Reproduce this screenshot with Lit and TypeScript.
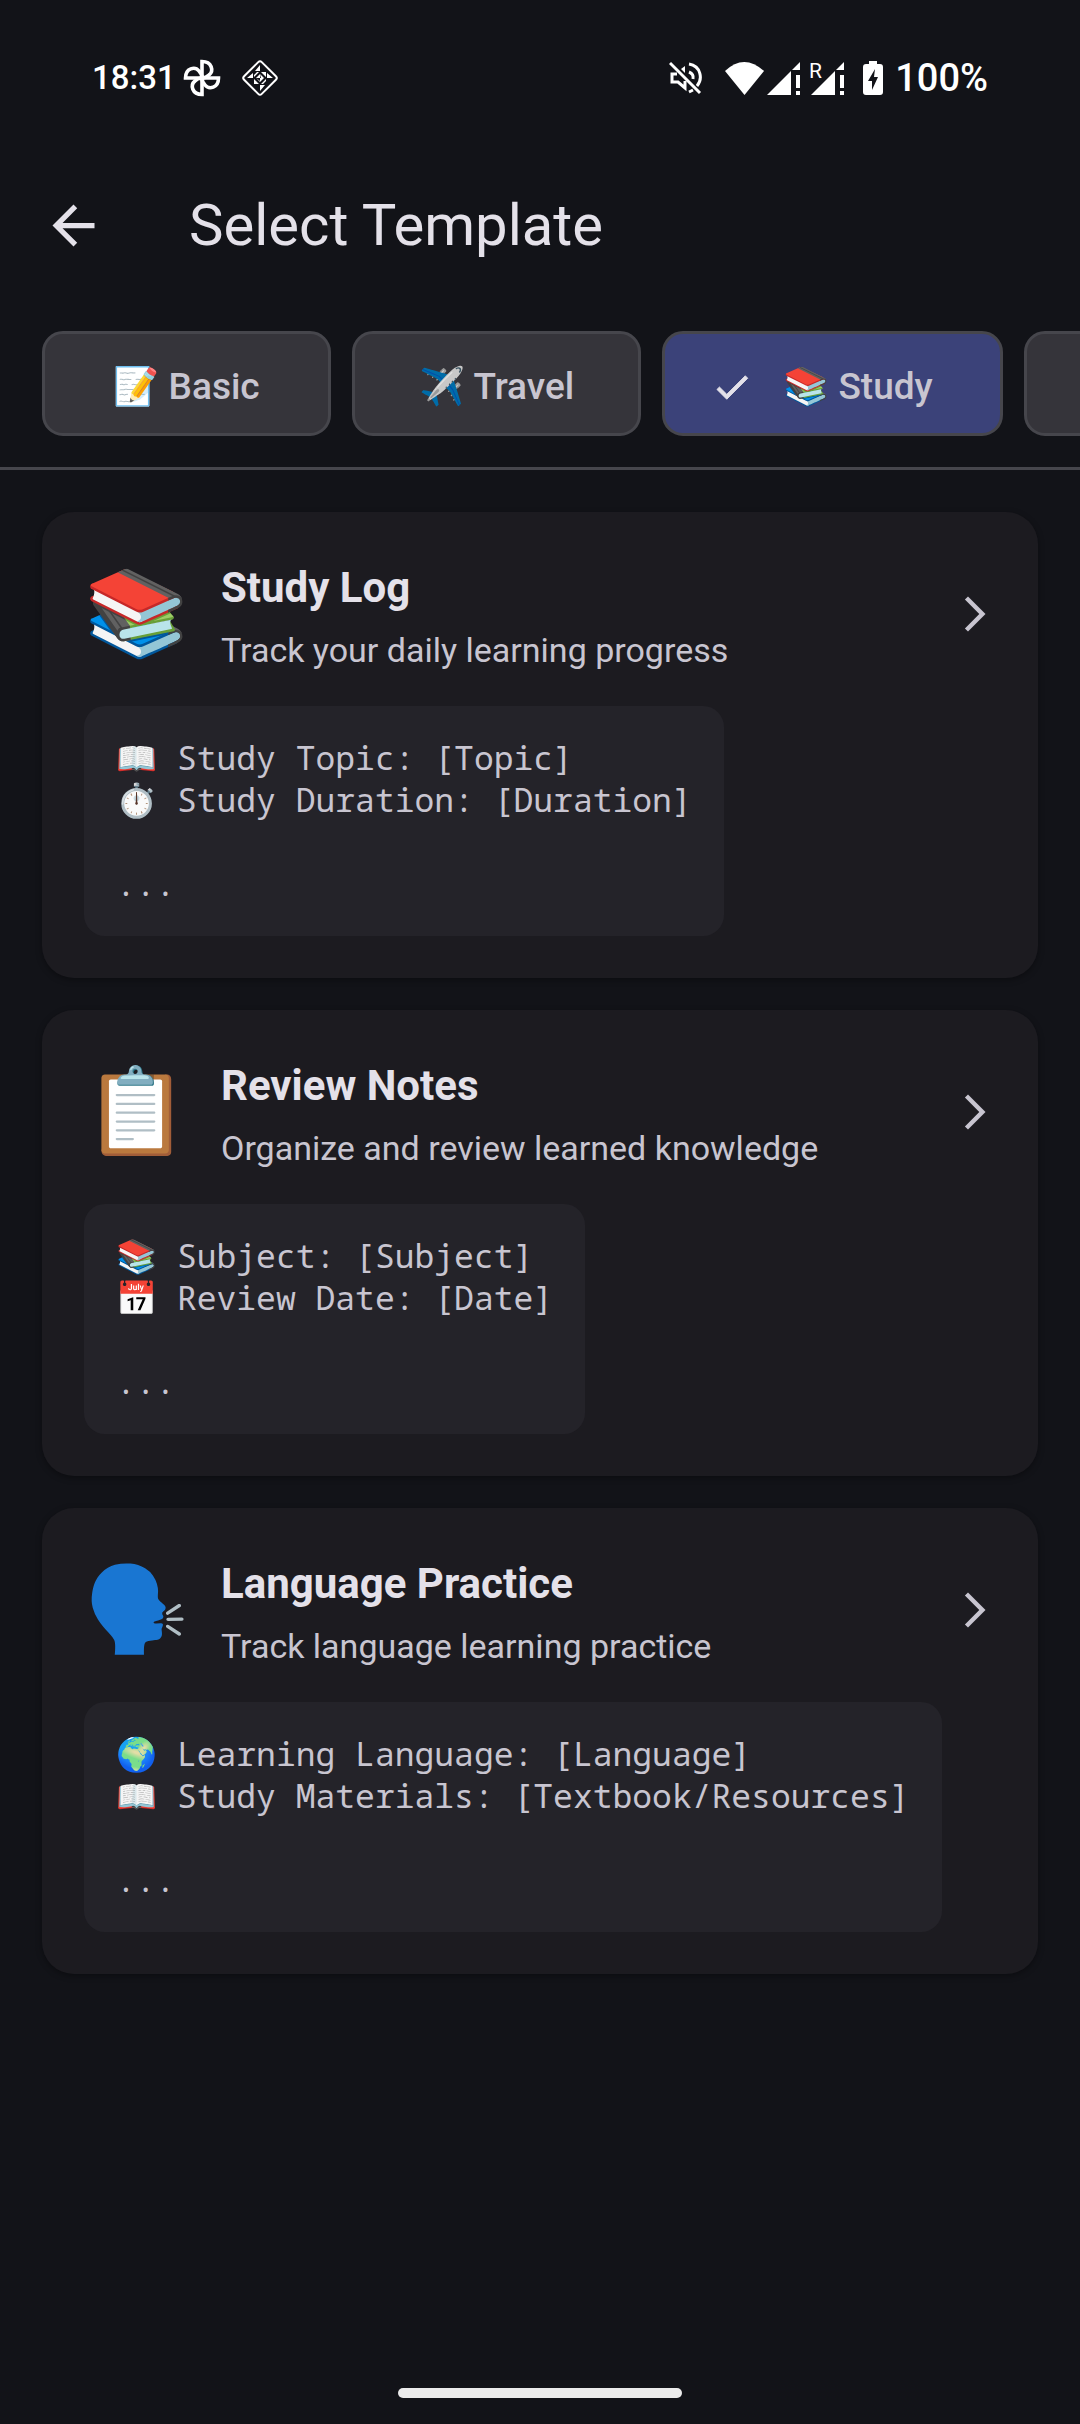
import { LitElement, html, css, svg, nothing } from "lit";
import { customElement, property, state } from "lit/decorators.js";

interface Category {
  id: string;
  emoji: string;
  label: string;
}

interface Template {
  emoji: string;
  title: string;
  summary: string;
  preview: string[];
}

const CATEGORIES: Category[] = [
  { id: "basic", emoji: "📝", label: "Basic" },
  { id: "travel", emoji: "✈️", label: "Travel" },
  { id: "study", emoji: "📚", label: "Study" },
  { id: "more", emoji: "", label: "" },
];

const TEMPLATES: Template[] = [
  {
    emoji: "📚",
    title: "Study Log",
    summary: "Track your daily learning progress",
    preview: ["📖 Study Topic: [Topic]", "⏱️ Study Duration: [Duration]", "", "..."],
  },
  {
    emoji: "📋",
    title: "Review Notes",
    summary: "Organize and review learned knowledge",
    preview: ["📚 Subject: [Subject]", "📅 Review Date: [Date]", "", "..."],
  },
  {
    emoji: "🗣️",
    title: "Language Practice",
    summary: "Track language learning practice",
    preview: ["🌍 Learning Language: [Language]", "📖 Study Materials: [Textbook/Resources]", "", "..."],
  },
];

const signal = svg`
  <path fill="#fff" d="M0 33 L24 9 V33 Z M25 8 L33 0 V8 Z M29 13 H33 V26 H29 Z M29 29 H33 V33 H29 Z" />
`;

@customElement("status-bar")
export class StatusBar extends LitElement {
  static styles = css`
    :host {
      display: flex;
      justify-content: space-between;
      align-items: center;
      height: 44px;
      padding: 56px 92px 0 92px;
      color: #fff;
      font: 500 33px/44px Roboto, sans-serif;
    }
    .group {
      display: flex;
      align-items: center;
    }
    svg {
      display: block;
    }
    .fan {
      margin-left: 7px;
    }
    .diamond {
      margin-left: 20px;
    }
    .wifi {
      margin-left: 23px;
    }
    .signal {
      margin-left: 3px;
    }
    .roaming {
      margin: -8px 0 0 10px;
    }
    .battery {
      margin: 0 12px 0 19px;
    }
    .level {
      font-size: 38px;
    }
  `;

  render() {
    return html`
      <div class="group">
        <span>18:31</span>
        <svg class="fan" width="38" height="38" viewBox="0 0 38 38" fill="none" stroke="#fff" stroke-width="3.600">
          <path d="M19 2.500 C29 2.500 31 12 26 16 Q23 19 19 19 Z" />
          <path d="M35.500 19 C35.500 29 26 31 22 26 Q19 23 19 19 Z" />
          <path d="M19 35.500 C9 35.500 7 26 12 22 Q15 19 19 19 Z" />
          <path d="M2.500 19 C2.500 9 12 7 16 12 Q19 15 19 19 Z" />
        </svg>
        <svg class="diamond" width="38" height="38" viewBox="0 0 38 38">
          <rect x="6.500" y="6.500" width="25" height="25" rx="2.500" transform="rotate(45 19 19)" fill="none" stroke="#fff" stroke-width="2" />
          <path
            fill="#fff"
            d="M19 6 V12 H14 Z M32 19 H26 V14 Z M19 32 V26 H24 Z M6 19 H12 V14 Z
               M20 13 H25 V18 Z M13 20 L18 25 H13 Z M13 18 L18 13 H16 L13 16 Z M25 20 L20 25 H22 L25 22 Z
               M19 15 V19 H15 Z M19 15 L23 19 H20 Z M19 23 V19 H23 Z M15 19 L19 23 V22 Z"
          />
        </svg>
      </div>
      <div class="group">
        <svg width="33" height="34" viewBox="0 0 33 34" fill="none" stroke="#fff" stroke-width="3">
          <path d="M8 13 H3 V21 H9 L16 27 V20" />
          <path d="M12 8 L16 5 V12" fill="#fff" stroke="none" />
          <path d="M20 3 C32 5 34 18 28 25 M24 29 Q22 30 20 31" />
          <path d="M20 11 Q25 13 24 18" />
          <path d="M1 2 L31 32" />
        </svg>
        <svg class="wifi" width="39" height="33" viewBox="0 0 39 33">
          <path fill="#fff" d="M0 9 Q19 -9 39 9 L19.500 33 Z" />
        </svg>
        <svg class="signal" width="33" height="33" viewBox="0 0 33 33">${signal}</svg>
        <svg class="roaming" width="34" height="41" viewBox="0 -8 34 41">
          <g transform="translate(1 0)">${signal}</g>
          <text x="-1" y="16" fill="#fff" font-family="Roboto, sans-serif" font-size="21" font-weight="400">R</text>
        </svg>
        <svg class="battery" width="20" height="34" viewBox="0 0 20 34">
          <path fill="#fff" d="M6 0 H14 V3 H17 Q20 3 20 6 V31 Q20 34 17 34 H3 Q0 34 0 31 V6 Q0 3 3 3 H6 Z" />
          <path fill="#121318" d="M12 8 L5 20 H9 V29 L15 16 H11 Z" />
        </svg>
        <span class="level">100%</span>
      </div>
    `;
  }
}

@customElement("category-chip")
export class CategoryChip extends LitElement {
  @property() emoji = "";
  @property() label = "";
  @property({ type: Boolean }) selected = false;

  static styles = css`
    :host {
      display: block;
      flex: none;
    }
    .chip {
      display: flex;
      align-items: center;
      justify-content: center;
      gap: 30px;
      box-sizing: border-box;
      height: 105px;
      min-width: 289px;
      padding: 6px 64px 0;
      border: 3px solid #46464c;
      border-radius: 21px;
      background: #35343a;
      color: #c8c5d0;
      font: 500 37px/54px Roboto, "Noto Color Emoji", sans-serif;
      white-space: nowrap;
      cursor: pointer;
    }
    .chip[aria-pressed="true"] {
      padding-left: 46px;
      padding-right: 67px;
      background: #3b4279;
    }
    svg {
      display: block;
    }
  `;

  render() {
    return html`
      <button class="chip" aria-pressed=${this.selected} aria-label=${this.label ? nothing : "More"}>
        ${this.selected
          ? html`<svg width="42" height="42" viewBox="0 0 24 24" fill="#e4e1e9" stroke="#e4e1e9" stroke-width="0.500">
              <path d="M9 16.170 4.830 12 3.410 13.410 9 19 21 7 19.590 5.590z" />
            </svg>`
          : nothing}
        ${this.label ? html`<span>${this.emoji} ${this.label}</span>` : nothing}
      </button>
    `;
  }
}

@customElement("template-card")
export class TemplateCard extends LitElement {
  @property({ attribute: false }) template!: Template;

  static styles = css`
    :host {
      display: block;
    }
    .card {
      display: flex;
      flex-direction: column;
      align-items: stretch;
      gap: 32px;
      width: 100%;
      padding: 42px;
      border: 0;
      border-radius: 32px;
      background: #1c1b20;
      box-shadow: 0 2px 6px rgba(0, 0, 0, 0.35);
      color: #c8c5d0;
      font-family: Roboto, "Noto Color Emoji", sans-serif;
      text-align: left;
      cursor: pointer;
    }
    .header {
      display: flex;
      align-items: center;
      height: 120px;
    }
    .emoji {
      width: 137px;
      font-size: 84px;
      line-height: 98px;
      white-space: nowrap;
    }
    .text {
      display: flex;
      flex-direction: column;
      flex: 1;
      gap: 11px;
    }
    .title {
      color: #e4e1e9;
      font-size: 42px;
      font-weight: 700;
      line-height: 60px;
    }
    .summary {
      font-size: 34px;
      line-height: 42px;
    }
    .preview {
      display: flex;
      flex-direction: column;
      align-self: flex-start;
      padding: 31px 32px;
      border-radius: 21px;
      background: #242329;
      font: 33px/42px "Noto Sans Mono", "DejaVu Sans Mono", "Noto Color Emoji", monospace;
    }
    .line {
      min-height: 42px;
      white-space: pre;
    }
  `;

  render() {
    const { emoji, title, summary, preview } = this.template;
    return html`
      <button class="card">
        <span class="header">
          <span class="emoji">${emoji}</span>
          <span class="text">
            <span class="title">${title}</span>
            <span class="summary">${summary}</span>
          </span>
          <svg width="42" height="42" viewBox="0 0 24 24" fill="#c8c5d0">
            <path d="M6.230 20.230 8 22l10-10L8 2 6.230 3.770 14.460 12z" />
          </svg>
        </span>
        <span class="preview">${preview.map((line) => html`<span class="line">${line}</span>`)}</span>
      </button>
    `;
  }
}

@customElement("app-root")
export class AppRoot extends LitElement {
  @state() private selected = "study";

  static styles = css`
    :host {
      display: flex;
      flex-direction: column;
      min-height: 100vh;
      background: #121318;
      overflow: hidden;
    }
    .toolbar {
      display: flex;
      align-items: center;
      gap: 84px;
      height: 168px;
      margin-top: 41px;
      padding: 0 42px;
    }
    .back {
      display: flex;
      padding: 0;
      border: 0;
      background: none;
      cursor: pointer;
    }
    .heading {
      margin: 0;
      color: #e4e1e9;
      font: 400 58px/74px Roboto, sans-serif;
    }
    .chips {
      display: flex;
      gap: 21px;
      padding: 22px 42px 31px;
      border-bottom: 3px solid #46464c;
      overflow: hidden;
    }
    .cards {
      display: flex;
      flex-direction: column;
      flex: 1;
      gap: 32px;
      padding: 42px;
    }
    .gesture {
      align-self: center;
      width: 284px;
      height: 10px;
      margin-bottom: 26px;
      border-radius: 5px;
      background: #ebebeb;
    }
  `;

  render() {
    return html`
      <status-bar></status-bar>
      <header class="toolbar">
        <button class="back" aria-label="Back">
          <svg width="63" height="63" viewBox="0 0 24 24" fill="#e4e1e9">
            <path d="M20 11H7.830l5.590-5.590L12 4l-8 8 8 8 1.410-1.410L7.830 13H20v-2z" />
          </svg>
        </button>
        <h1 class="heading">Select Template</h1>
      </header>
      <nav class="chips" aria-label="Template categories">
        ${CATEGORIES.map(
          (c) => html`<category-chip
            .emoji=${c.emoji}
            .label=${c.label}
            .selected=${c.id === this.selected}
            @click=${() => (this.selected = c.id)}
          ></category-chip>`
        )}
      </nav>
      <main class="cards">${TEMPLATES.map((t) => html`<template-card .template=${t}></template-card>`)}</main>
      <div class="gesture"></div>
    `;
  }
}
